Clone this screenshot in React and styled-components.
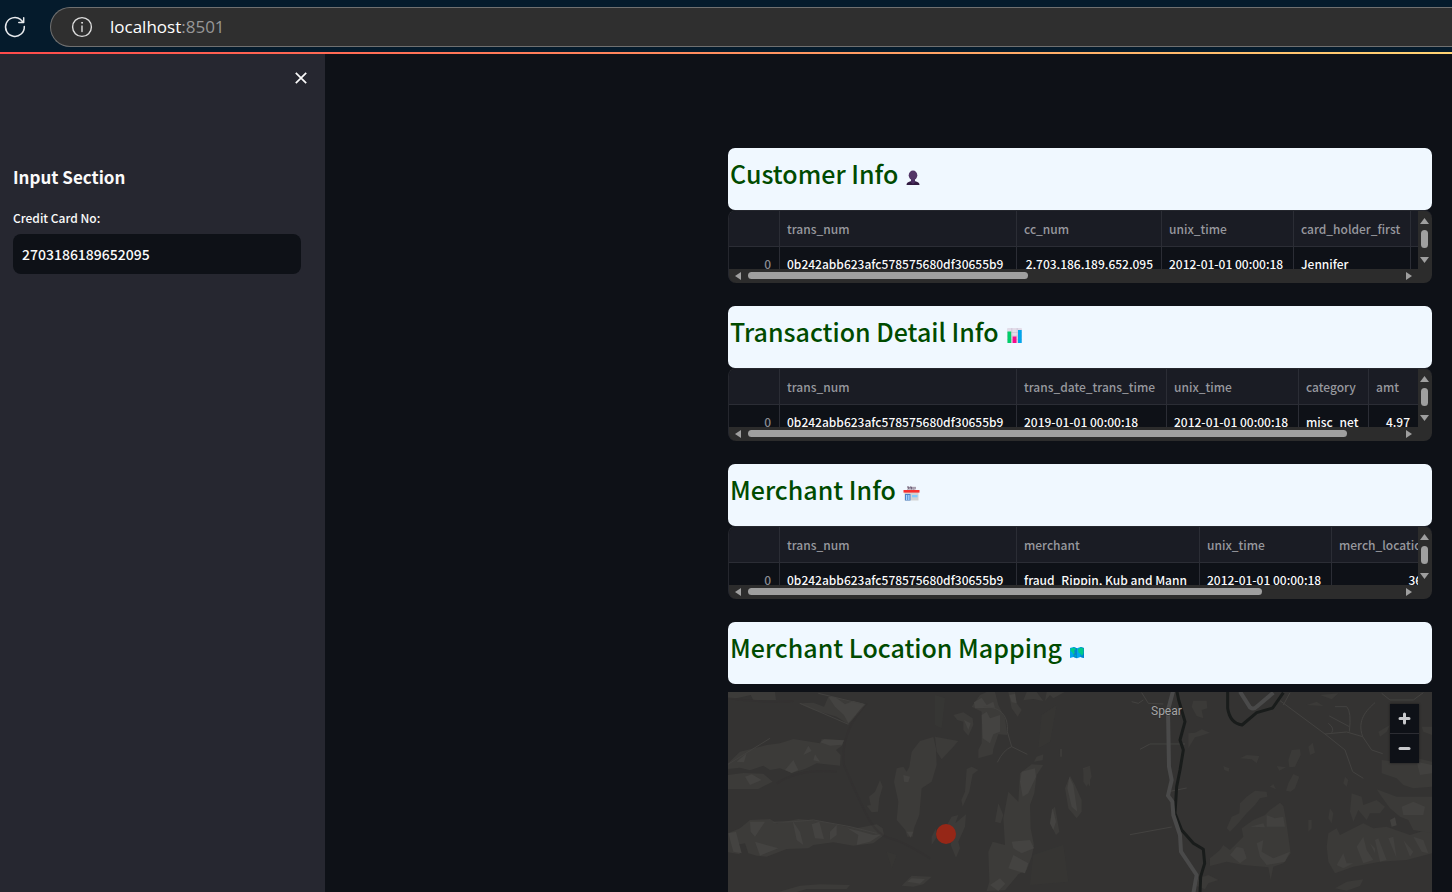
import React from "react";
import styled, { createGlobalStyle } from "styled-components";

const SANS = `"Noto Sans CJK SC", "Open Sans", sans-serif`;

const GlobalStyle = createGlobalStyle`
  * { box-sizing: border-box; }
  body { margin: 0; background: #0e1117; color: #fafafa; font-family: ${SANS}; }
`;

const Page = styled.div`
  display: flex;
  flex-direction: column;
  height: 100vh;
  overflow: hidden;
`;

const BrowserBar = styled.header`
  flex: none;
  display: flex;
  align-items: center;
  gap: 22px;
  height: 52px;
  padding: 2px 0 0 2px;
  background: #051b2c;
`;

const IconButton = styled.button`
  display: flex;
  padding: 0;
  border: 0;
  background: none;
  color: ${(p) => p.$color || "#fafafa"};
  cursor: pointer;
`;

const AddressBar = styled.div`
  flex: 1;
  display: flex;
  align-items: center;
  gap: 17px;
  height: 40px;
  padding: 0 0 1px 20px;
  border: 1px solid #707070;
  border-right: 0;
  border-radius: 20px 0 0 20px;
  background: #2f2f2f;
`;

const Address = styled.span`
  font: 17px/24px "Open Sans", sans-serif;
  color: #ffffff;
`;

const Port = styled.span`
  color: #979797;
`;

const Decoration = styled.div`
  flex: none;
  height: 2px;
  background: linear-gradient(90deg, #ff4b4b, #fffd80 130%);
`;

const Body = styled.div`
  flex: 1;
  display: flex;
  min-height: 0;
`;

const Sidebar = styled.aside`
  flex: none;
  width: 325px;
  padding: 16px 24px 24px 13px;
  background: #262730;
`;

const SidebarTop = styled.div`
  display: flex;
  justify-content: flex-end;
  height: 91px;
  margin-right: -8px;
`;

const SidebarTitle = styled.h2`
  margin: 0 0 16px;
  font-size: 17px;
  line-height: 32px;
  font-weight: 700;
`;

const FieldLabel = styled.label`
  display: block;
  margin-bottom: 7px;
  font-size: 12px;
  line-height: 18px;
  font-weight: 500;
`;

const TextInput = styled.input`
  width: 100%;
  height: 40px;
  padding: 0 9px;
  border: 0;
  border-radius: 8px;
  background: #0e1117;
  color: #fafafa;
  font: 500 14px/20px ${SANS};
`;

const Main = styled.main`
  flex: 1;
  display: grid;
  grid-template-columns: 383fr 704fr;
  min-width: 0;
  padding: 94px 20px 0;
`;

const Results = styled.div`
  grid-column: 2;
  display: flex;
  flex-direction: column;
  gap: 24px;
  min-width: 0;
  min-height: 0;
`;

const Section = styled.section`
  display: flex;
  flex-direction: column;
  flex: ${(p) => (p.$grow ? "1" : "none")};
  min-height: 0;
`;

const SectionTitle = styled.h2`
  display: flex;
  align-items: flex-start;
  gap: 7px;
  flex: none;
  height: 62px;
  margin: 0;
  padding: 5px 2px;
  border-radius: 7px;
  background: #f0f8ff;
  color: #004b00;
  font-size: 25px;
  line-height: 40px;
  font-weight: 500;
  svg { margin-top: 16px; }
`;

const Frame = styled.div`
  display: grid;
  grid-template-columns: minmax(0, 1fr) 14px;
  grid-template-rows: 58px 14px;
  height: 73px;
  margin-bottom: -1px;
  border: 1px solid #25272e;
  border-width: 1px 0 0 1px;
  border-radius: 8px;
  overflow: hidden;
  background: #2c2c2c;
`;

const Viewport = styled.div`
  overflow: hidden;
  background: #0e1117;
`;

const Table = styled.table`
  table-layout: fixed;
  width: ${(p) => p.$width}px;
  border-collapse: separate;
  border-spacing: 0;
  font-size: 12px;
`;

const Cell = styled.td`
  height: 34px;
  padding: 0 8px 0 7px;
  border: solid #2b2d35;
  border-width: 0 1px 1px 0;
  color: ${(p) => (p.$muted ? "#8b8d93" : "#fafafa")};
  font-weight: 500;
  line-height: 18px;
  text-align: ${(p) => (p.$right ? "right" : "left")};
  white-space: nowrap;
`;

const HeadCell = styled(Cell)`
  height: 36px;
  background: #1a1c24;
  color: #97989e;
`;

const VBar = styled.div`
  display: flex;
  flex-direction: column;
  align-items: center;
  justify-content: space-between;
  padding: 7px 2px 6px 0;
`;

const VThumb = styled.div`
  width: 7px;
  height: 18px;
  border-radius: 4px;
  background: #9f9f9f;
  margin-bottom: 4px;
`;

const HBar = styled.div`
  display: flex;
  align-items: center;
  gap: 7px;
  padding: 0 6px 1px;
`;

const HTrack = styled.div`
  flex: 1;
  height: 7px;
`;

const HThumb = styled.div`
  width: ${(p) => p.$share}%;
  height: 7px;
  border-radius: 4px;
  background: #9f9f9f;
`;

const MapView = styled.div`
  position: relative;
  flex: 1;
  min-height: 200px;
  margin-top: 8px;
  overflow: hidden;
  background: #343332;
`;

const Terrain = styled.svg`
  display: block;
  width: 100%;
  height: 100%;
`;

const ZoomControls = styled.div`
  position: absolute;
  top: 12px;
  right: 13px;
  display: flex;
  flex-direction: column;
  gap: 1px;
  background: #2c2d33;
  box-shadow: 0 0 2px #1a1a1a;
`;

const ZoomButton = styled.button`
  display: grid;
  place-items: center;
  width: 29px;
  height: 29px;
  padding: 0;
  border: 0;
  background: #0e1117;
  cursor: pointer;
`;

const ARROWS = {
  up: ["9", "6", "M4.500 0L9 6H0Z"],
  down: ["9", "6", "M0 0H9L4.500 6Z"],
  left: ["6", "8", "M6 0V8L0 4Z"],
  right: ["6", "8", "M0 0V8L6 4Z"],
};

function Arrow({ dir }) {
  const [w, h, d] = ARROWS[dir];
  return (
    <svg width={w} height={h} viewBox={`0 0 ${w} ${h}`} aria-hidden="true">
      <path d={d} fill="#9f9f9f" />
    </svg>
  );
}

const PersonIcon = () => (
  <svg width="16" height="18" viewBox="0 0 16 18" aria-hidden="true">
    <path d="M1.500 16c0-2 1-3 4-3.800h5c3 .8 4 1.800 4 3.800Z" fill="#321b41" />
    <path d="M6 9h4v4.500L8 15 6 13.500Z" fill="#4a2d60" />
    <ellipse cx="8" cy="6.300" rx="4.300" ry="4.800" fill="#533566" />
  </svg>
);

const ChartIcon = () => (
  <svg width="17" height="18" viewBox="0 0 17 18" aria-hidden="true">
    <rect x="1" y="1" width="15" height="15" rx="1" fill="#e2dce9" />
    <path d="M1 5.500H16M1 9H16M1 12.500H16M5.800 1V16M11.200 1V16" stroke="#cbc2d4" strokeWidth=".7" />
    <rect x="1.500" y="4.500" width="3.700" height="11.500" fill="#00cf6b" />
    <rect x="6.600" y="9.500" width="3.900" height="6.500" fill="#f70a8d" />
    <rect x="12" y="3" width="3.700" height="13" fill="#00a6ed" />
  </svg>
);

const StoreIcon = () => (
  <svg width="17" height="18" viewBox="0 0 17 18" aria-hidden="true">
    <rect x="1.500" y="7" width="14" height="8.500" fill="#d3d3d3" />
    <rect x="4" y="1.500" width="9" height="3.500" fill="#dcd8e0" />
    <path d="M4 2h2l-1 2.500M7 4.500V2h1.500v2.500M10 2v2.500M12 2v1.500l-1 1" stroke="#594a66" strokeWidth=".8" fill="none" />
    <rect x=".5" y="5" width="16" height="2.600" fill="#f8312f" />
    <path d="M2 9h5.500v6.500H2Z" fill="#4b83c9" />
    <path d="M3 10h1.300v5H3ZM5.200 10h1.300v5H5.200Z" fill="#a8d8ff" />
    <rect x="9" y="10" width="5.500" height="2.300" fill="#83cbff" />
  </svg>
);

const MapIcon = () => (
  <svg width="16" height="18" viewBox="0 0 16 18" aria-hidden="true">
    <path d="M1 5l3.500-1L8 5.200 11.500 4 15 5v10l-3.500-1L8 15.200 4.500 14 1 15Z" fill="#00a6ed" />
    <path d="M4.500 4L8 5.200v10L4.500 14ZM11.500 4L15 5v10l-3.500-1Z" fill="#0084ce" />
    <path d="M1.500 5.500l4-.7 1.500 1.500-2 1.500.8 2-1.500 2-1-2.500L1.500 8ZM9 6l3-1.500 2.500 1V10L13 13l-1.500-2L9.500 9.500ZM5.500 11.500l1.500 1-1 1.500Z" fill="#00c98a" />
  </svg>
);

const HASH = "0b242abb623afc578575680df30655b9";
const UNIX = "2012-01-01 00:00:18";

const SECTIONS = [
  {
    title: "Customer Info",
    Icon: PersonIcon,
    share: 43,
    columns: [
      { name: "trans_num", width: 237, value: HASH },
      { name: "cc_num", width: 145, value: "2,703,186,189,652,095", right: true },
      { name: "unix_time", width: 132, value: UNIX },
      { name: "card_holder_first", width: 117, value: "Jennifer" },
      { name: "", width: 60, value: "" },
    ],
  },
  {
    title: "Transaction Detail Info",
    Icon: ChartIcon,
    share: 92,
    columns: [
      { name: "trans_num", width: 237, value: HASH },
      { name: "trans_date_trans_time", width: 150, value: "2019-01-01 00:00:18" },
      { name: "unix_time", width: 132, value: UNIX },
      { name: "category", width: 70, value: "misc_net" },
      { name: "amt", width: 50, value: "4.97", right: true },
    ],
  },
  {
    title: "Merchant Info",
    Icon: StoreIcon,
    share: 79,
    columns: [
      { name: "trans_num", width: 237, value: HASH },
      { name: "merchant", width: 183, value: "fraud_Rippin, Kub and Mann" },
      { name: "unix_time", width: 132, value: UNIX },
      { name: "merch_location", width: 130, value: "36.0113", right: true },
    ],
  },
];

function DataFrame({ columns, share }) {
  const width = columns.reduce((sum, c) => sum + c.width, 51);
  return (
    <Frame>
      <Viewport>
        <Table $width={width}>
          <colgroup>
            <col width="51" />
            {columns.map((c, i) => <col key={i} width={c.width} />)}
          </colgroup>
          <thead>
            <tr>
              <HeadCell as="th" />
              {columns.map((c, i) => <HeadCell as="th" key={i}>{c.name}</HeadCell>)}
            </tr>
          </thead>
          <tbody>
            <tr>
              <Cell $muted $right>0</Cell>
              {columns.map((c, i) => <Cell key={i} $right={c.right}>{c.value}</Cell>)}
            </tr>
          </tbody>
        </Table>
      </Viewport>
      <VBar>
        <Arrow dir="up" />
        <VThumb />
        <Arrow dir="down" />
      </VBar>
      <HBar>
        <Arrow dir="left" />
        <HTrack><HThumb $share={share} /></HTrack>
        <Arrow dir="right" />
      </HBar>
    </Frame>
  );
}

/* Hill shading, roads and the river, drawn in two halves at three units per pixel. */
function TerrainDrawing() {
  return (
    <Terrain viewBox="0 0 704 200" preserveAspectRatio="xMinYMin slice" role="img" aria-label="Map around Spear">
      <g transform="translate(-8 -77) scale(.33333)">
        <g fill="#3c3b39">
          <path d="M24 231H165L168 255H100L92 240 50 250H24Z" />
          <path d="M235 265L280 263 312 275 325 245 350 248 385 258 437 268 420 290 385 328 350 305 305 292 280 285Z" />
          <path d="M24 445L60 410 140 390 180 385 220 372 300 385 305 372 372 376 366 392 348 405 362 420 360 452 290 445 255 462 215 474 180 460 150 465 130 452 90 466 60 458 24 462Z" />
          <path d="M24 480L70 474 130 476 158 500 115 522H24Z" />
          <path d="M24 655L60 640 90 615 150 612 170 625 235 612 300 618 380 635 410 640 470 628 488 640 492 660 460 685 400 692 340 682 280 690 265 700 200 702 140 725 110 722 85 715 75 685 48 690 60 718 24 712Z" />
          <path d="M575 410L600 378 640 366 648 400 650 450 635 500 605 520 598 600 582 640 578 665 562 665 556 645 530 615 535 560 522 500 530 460 550 455 560 470 568 455Z" />
          <path d="M645 365L715 378 700 395 665 433 650 410Z" />
          <path d="M480 495L488 515 478 550 474 590 455 592 440 572 452 570 447 545 465 530Z" />
          <path d="M740 462L755 455 775 465 758 478 748 530 728 575 724 555 735 530Z" />
          <path d="M695 605L715 600 706 625 738 598 735 635 715 680 720 700 708 728 692 690 698 655 675 640ZM648 640V670L635 690V665Z" />
          <path d="M700 300L730 292 758 310 760 330 745 362 730 345 730 320 712 315Z" />
          <path d="M755 275L780 240 800 231H825L835 270 855 310 862 360 835 358 820 402 818 418 775 430V405L785 385V290Z" />
          <path d="M865 231H885L890 265 905 285 893 305 875 280ZM920 231H950L970 258 940 252 910 256ZM980 231H1034L1000 250 990 240 975 258Z" />
          <path d="M900 475L935 448 970 450 950 480 943 535 930 570 932 640 942 690 935 725 920 765 895 778 855 826 800 828 808 800 805 710 818 680 855 690 850 610 865 530 895 560Z" />
          <path d="M835 565L850 600 842 625 825 620ZM950 425L970 418 968 436 942 440ZM1020 402H1026V425H1020Z" />
          <path d="M1050 482L1065 510 1085 555V590L1070 610 1045 580 1035 520ZM1005 575L1018 650 1008 660 990 625 995 585ZM1088 460L1110 452V515L1095 490Z" />
          <path d="M545 812L575 782 635 785 610 808 580 815ZM175 831L240 812 300 808 390 810 380 822 260 822 230 831Z" />
          <path d="M645 240L675 250 665 340 645 330Z" opacity=".35" />
          <path d="M965 300L1010 270 990 380 955 400ZM940 720L1030 690 1045 800 930 810ZM500 710L530 720 515 760Z" opacity=".3" />
        </g>
        <g fill="#444341">
          <path d="M325 245L345 246 375 268 400 258 437 268 415 290 385 325 372 300 345 275Z" />
          <path d="M301 382L312 373 372 376 366 389 330 392ZM265 392L275 408 250 420ZM50 440L80 415 72 442ZM285 418L300 440 280 436ZM195 465L220 435 235 465 215 474ZM75 485L95 478 125 495 90 510Z" />
          <path d="M25 655L48 650 65 715 40 710ZM90 620H135L105 665 92 650ZM218 618L240 650 250 690 230 675ZM275 628L298 620 312 672 285 670ZM330 650L350 630V660L330 675ZM105 680L175 700 120 722ZM382 640L425 650 460 660 485 658 450 680 410 690 415 660Z" />
          <path d="M785 300L800 290 810 310 840 300V350L820 358 810 385 788 370ZM762 262L785 248 800 270 820 260 825 278 765 280ZM732 315L752 325 745 345Z" />
          <path d="M905 470L945 460 948 485 925 535 908 545 900 500ZM875 680L930 675 942 700 905 715 880 700ZM880 720L925 745 915 775 865 760ZM810 810L840 790 856 806 835 828ZM1048 485L1060 510 1072 590 1055 575 1042 520ZM998 580L1008 620 1000 645 990 625Z" />
          <path d="M550 480L570 485 565 502 552 500ZM560 650H580L572 668ZM575 790L615 792 600 806 562 800ZM868 240L885 236 890 265 875 262Z" />
        </g>
        <g fill="none" stroke="#42413f" strokeWidth="3">
          <path d="M295 235L430 268M24 448L150 370M790 275C850 275 865 310 862 350L875 395L922 418M875 395Q850 405 832 442M240 265L385 328M160 622L220 620 280 615 390 635 470 655" />
        </g>
        <path d="M440 265Q360 350 372 450Q410 540 440 600T510 670 630 730M24 250Q130 265 220 258M170 505Q240 460 350 470" fill="none" stroke="#31302f" strokeWidth="6" opacity=".4" />
      </g>
      <g transform="translate(352 -12) scale(.33333)">
        <g fill="#3b3a38">
          <path d="M340 62H380L382 85 365 90 370 115 350 108 335 80ZM325 160L345 158 365 148 390 158 360 168 345 172 325 205ZM10 270L30 260 35 290 20 320 10 305Z" />
          <path d="M480 235L500 225 538 228 530 250 515 238ZM625 240L635 210 660 208 662 225 645 260 628 262ZM590 258L618 262 598 272ZM685 200L698 188 705 218 690 225ZM430 258L448 265 446 275 433 270Z" />
          <path d="M625 310L640 282 658 290 645 325 632 335 618 332ZM570 320L580 312 588 328ZM795 290L805 300 800 320 790 310ZM440 445L455 410 478 400 480 370 500 350 525 332 560 335 562 350 540 355 525 375 500 400 470 435 450 455Z" />
          <path d="M485 445L520 420 555 405 570 390 600 368 610 378 618 420 632 520 610 550 580 560 572 600 565 562 490 555 440 545 390 558V535L420 510 430 495 450 510 490 470Z" />
          <path d="M745 460L770 445 780 465 850 430 880 445 920 440 990 465 1056 445V520L980 540 900 545 820 560 765 580 745 545 740 500Z" />
          <path d="M905 240L950 245 1000 232 1056 245V320L1000 325 970 315 950 295 905 280ZM895 155L930 135 920 155 900 170ZM1025 140H1056V165L1030 155Z" />
          <path d="M815 340L845 350 850 375 890 360 915 380 900 400 870 400 860 420 835 390 820 425 810 395ZM890 328L950 350 1056 350V460L1000 450 985 420 960 410 930 385 905 350ZM750 385L760 400 755 430 745 415ZM685 420H695V445L685 455Z" />
          <path d="M355 595L385 585 415 600 385 610 375 628 350 618ZM765 625L800 605 850 598 840 618 800 632ZM680 75L710 65 730 78ZM720 45L775 40 755 58Z" />
        </g>
        <g fill="#42413f">
          <path d="M450 525L470 500 490 505 500 535 480 550ZM530 490L550 480 545 515 580 535 630 515 615 545 560 555 540 530ZM560 405L585 415 610 410 615 440H560ZM510 440L550 430 555 442Z" />
          <path d="M770 555L790 520 800 550 820 550 790 565ZM830 500L850 470 860 510 880 540 850 550ZM885 480L895 475 920 540 900 545ZM925 475L940 470 950 535ZM970 480L1000 515 990 530ZM1000 470L1030 480 1045 520 1025 515ZM965 380L1000 365 1035 380 1030 405 970 405ZM930 420L945 412 950 436 935 440ZM1010 245L1056 255V280L1020 285ZM870 490L885 505 885 520Z" />
        </g>
        <g fill="none" stroke="#434240" strokeWidth="3">
          <path d="M185 38L205 70 250 72M155 65L175 70 190 60M180 208L210 192H315M150 464L275 441M265 335L320 324" />
          <path d="M600 62L735 162 800 156 848 170 875 210 908 221M735 162L795 210 818 275 850 295M765 80H800Q815 95 808 155M748 108L808 140M745 130Q765 145 755 158M848 170C830 120 860 90 885 68M610 75L630 38M905 40L930 60H1000L1030 38" />
        </g>
        <path d="M290 30L296 60L315 125L300 180L310 210L300 270L290 320L285 400L305 450L340 490L370 508L374 550L362 590L360 640M443 30V85Q450 130 486 135L530 98L578 84L610 38" fill="none" stroke="#191c1b" strokeWidth="9" strokeLinejoin="round" />
        <path d="M280 30L264 90L267 260L275 300L264 347L277 365L280 405L300 465L303 515L350 585L340 640M480 35L510 82Q520 90 530 80L580 38" fill="none" stroke="#4a4a4a" strokeWidth="12" strokeLinejoin="round" />
      </g>
      <text x="423" y="23" fill="#a5a5a5" stroke="#2a2a2a" strokeWidth="1" paintOrder="stroke" fontFamily="Roboto, sans-serif" fontSize="12">Spear</text>
      <circle cx="218" cy="142" r="10" fill="#962717" />
    </Terrain>
  );
}

export default function App() {
  return (
    <Page>
      <GlobalStyle />
      <BrowserBar>
        <IconButton aria-label="Reload" $color="#e8eaed">
          <svg width="26" height="26" viewBox="0 0 26 26" fill="none" stroke="currentColor" strokeWidth="1.500" strokeLinecap="round" strokeLinejoin="round">
            <path d="M22.300 12.500A9.400 9.400 0 1 1 18.500 5.400L21.300 8.300M21.700 3.800V8.500H16.800" />
          </svg>
        </IconButton>
        <AddressBar>
          <IconButton aria-label="Site information" $color="#dddddd">
            <svg width="22" height="22" viewBox="0 0 22 22" fill="none" stroke="currentColor" strokeWidth="1.400" strokeLinecap="round">
              <circle cx="11" cy="11" r="9.400" />
              <path d="M11 10V15.500" />
              <circle cx="11" cy="6.800" r=".5" fill="currentColor" strokeWidth="1" />
            </svg>
          </IconButton>
          <Address>localhost<Port>:8501</Port></Address>
        </AddressBar>
      </BrowserBar>
      <Decoration />
      <Body>
        <Sidebar>
          <SidebarTop>
            <IconButton aria-label="Close sidebar">
              <svg width="16" height="16" viewBox="0 0 16 16" stroke="currentColor" strokeWidth="1.700">
                <path d="M2.800 2.800L13.200 13.200M13.200 2.800L2.800 13.200" />
              </svg>
            </IconButton>
          </SidebarTop>
          <SidebarTitle>Input Section</SidebarTitle>
          <FieldLabel htmlFor="card">Credit Card No:</FieldLabel>
          <TextInput id="card" type="text" defaultValue="2703186189652095" />
        </Sidebar>
        <Main>
          <Results>
            {SECTIONS.map(({ title, Icon, columns, share }) => (
              <Section key={title}>
                <SectionTitle>{title}<Icon /></SectionTitle>
                <DataFrame columns={columns} share={share} />
              </Section>
            ))}
            <Section $grow>
              <SectionTitle>Merchant Location Mapping<MapIcon /></SectionTitle>
              <MapView>
                <TerrainDrawing />
                <ZoomControls>
                  <ZoomButton aria-label="Zoom in">
                    <svg width="13" height="13" viewBox="0 0 13 13" stroke="#c8c9cc" strokeWidth="3" strokeLinecap="round">
                      <path d="M6.500 2V11M2 6.500H11" />
                    </svg>
                  </ZoomButton>
                  <ZoomButton aria-label="Zoom out">
                    <svg width="13" height="13" viewBox="0 0 13 13" stroke="#c8c9cc" strokeWidth="3" strokeLinecap="round">
                      <path d="M2 6.500H11" />
                    </svg>
                  </ZoomButton>
                </ZoomControls>
              </MapView>
            </Section>
          </Results>
        </Main>
      </Body>
    </Page>
  );
}
